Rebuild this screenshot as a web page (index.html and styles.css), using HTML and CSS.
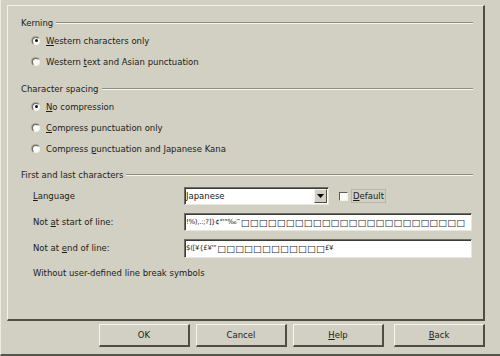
FILE: index.html
```html
<!DOCTYPE html>
<html>
<head>
<meta charset="utf-8">
<link rel="stylesheet" href="styles.css">
</head>
<body>
<div class="window">
  <div class="panel">
    <div class="group">
      <div class="head"><span class="htext">Kerning</span><span class="groove"></span></div>
      <div class="radio-row"><span class="radio on"></span><span><u>W</u>estern characters only</span></div>
      <div class="radio-row"><span class="radio"></span><span>Western <u>t</u>ext and Asian punctuation</span></div>
    </div>
    <div class="group g2">
      <div class="head"><span class="htext">Character spacing</span><span class="groove"></span></div>
      <div class="radio-row"><span class="radio on"></span><span><u>N</u>o compression</span></div>
      <div class="radio-row"><span class="radio"></span><span><u>C</u>ompress punctuation only</span></div>
      <div class="radio-row"><span class="radio"></span><span>Compress <u>p</u>unctuation and Japanese Kana</span></div>
    </div>
    <div class="group g3">
      <div class="head"><span class="htext">First and last characters</span><span class="groove"></span></div>
      <div class="field-row">
        <span class="flabel"><u>L</u>anguage</span>
        <div class="select">
          <span class="sel-text">Japanese</span>
          <span class="sel-btn"><svg width="7" height="4" viewBox="0 0 7 4"><path d="M0 0H7L3.5 4Z" fill="#000"/></svg></span>
        </div>
        <span class="check"></span>
        <span class="chk-label"><u>D</u>efault</span>
      </div>
      <div class="field-row">
        <span class="flabel">Not <u>a</u>t start of line:</span>
        <div class="entry"><span class="sym">!%),.:;?]}¢°'"‰′″</span><span class="boxes">□□□□□□□□□□□□□□□□□□□□□□□□□</span></div>
      </div>
      <div class="field-row">
        <span class="flabel">Not at <u>e</u>nd of line:</span>
        <div class="entry e2"><span class="sym">$([¥{£¥'"</span><span class="boxes">□□□□□□□□□□□□</span><span class="sym">£¥</span></div>
      </div>
      <div class="note">Without user-defined line break symbols</div>
    </div>
  </div>
  <div class="buttons">
    <button class="btn">OK</button>
    <button class="btn">Cancel</button>
    <button class="btn"><u>H</u>elp</button>
    <button class="btn back"><u>B</u>ack</button>
  </div>
</div>
</body>
</html>
```
FILE: styles.css
```css
* { box-sizing: border-box; }
html, body { margin: 0; padding: 0; }
body {
  width: 500px; height: 356px; overflow: hidden;
  background: #d2d0c2;
  font-family: "DejaVu Sans", sans-serif;
  font-size: 8.5px;
  color: #1c1c18;
}
u { text-decoration: underline; text-underline-offset: 1px; }
.window {
  width: 500px; height: 356px;
  display: flex; flex-direction: column;
  border-bottom: 2px solid #55554c;
  border-left: 1px solid #ecebe2;
}
.panel {
  margin: 5px 15px 0 6px;
  height: 316px;
  border-top: 1px solid #f2f1ea;
  border-left: 1px solid #f2f1ea;
  border-right: 2px solid #4e4e46;
  border-bottom: 2px solid #4e4e46;
  padding: 10px 10px 0 13px;
  display: flex; flex-direction: column;
}
.head { display: flex; align-items: center; height: 14px; }
.htext { padding-right: 3px; }
.groove { flex: 1; height: 2px; border-top: 1px solid #8e8c80; border-bottom: 1px solid #f6f5ee; }
.radio-row { display: flex; align-items: center; height: 21px; padding-left: 11px; gap: 6px; }
.radio {
  width: 8px; height: 8px; border-radius: 50%;
  background: #fbfbf6;
  border: 1px solid; border-color: #6a6a62 #f4f4ee #f4f4ee #6a6a62;
  box-shadow: -0.5px -0.5px 0 0.5px #a6a59a;
  position: relative;
}
.radio.on::after {
  content: ""; position: absolute; left: 1.5px; top: 1.5px;
  width: 3px; height: 3px; border-radius: 50%; background: #111;
}
.g2 { margin-top: 10px; }
.g3 { margin-top: 9px; }
.field-row { display: flex; align-items: center; height: 18px; margin-top: 8px; }
.g3 .head + .field-row { margin-top: 5px; }
.flabel { width: 163px; padding-left: 12px; flex: none; }
.select {
  width: 145px; height: 18px; display: flex; background: #fff;
  border: 1px solid; border-color: #6e6d64 #e8e7de #e8e7de #6e6d64;
  box-shadow: inset 1px 1px 0 #3c3c36;
}
.sel-text { flex: 1; padding-left: 1px; line-height: 16px; }
.sel-btn {
  width: 13px; height: 14px; margin: 1px 1px 1px 0; background: #d2d0c2;
  border: 1px solid; border-color: #f4f3ec #4e4e46 #4e4e46 #f4f3ec;
  display: flex; align-items: center; justify-content: center;
}
.check {
  width: 9px; height: 9px; margin-left: 10px; background: #fbfbf6;
  border: 1px solid; border-color: #5e5e56 #f4f4ee #f4f4ee #5e5e56;
}
.chk-label { margin-left: 3px; padding: 1px 1px; border: 1px solid #b8b6a8; }
.entry {
  width: 288px; height: 18px; background: #fff; overflow: hidden; white-space: nowrap;
  border: 1px solid; border-color: #6e6d64 #e8e7de #e8e7de #6e6d64;
  box-shadow: inset 1px 1px 0 #3c3c36;
  display: flex; align-items: center; padding-left: 1px;
}
.e2 { height: 19px; }
.sym { font-size: 7px; letter-spacing: -0.3px; flex: none; }
.boxes { font-size: 9.5px; letter-spacing: 0; margin-left: 1px; flex: none; }
.note { margin-top: 7px; padding-left: 12px; height: 18px; line-height: 18px; }
.buttons { display: flex; justify-content: flex-end; padding: 3px 15px 0 0; gap: 6px; }
.btn {
  width: 91px; height: 23px; padding: 0; margin: 0;
  font: inherit; color: inherit; background: #d2d0c2;
  border: 1px solid; border-color: #f6f5ee #4e4e46 #4e4e46 #f6f5ee;
  border-right-width: 2px; border-bottom-width: 2px;
}
.back { margin-left: 4px; }
```
